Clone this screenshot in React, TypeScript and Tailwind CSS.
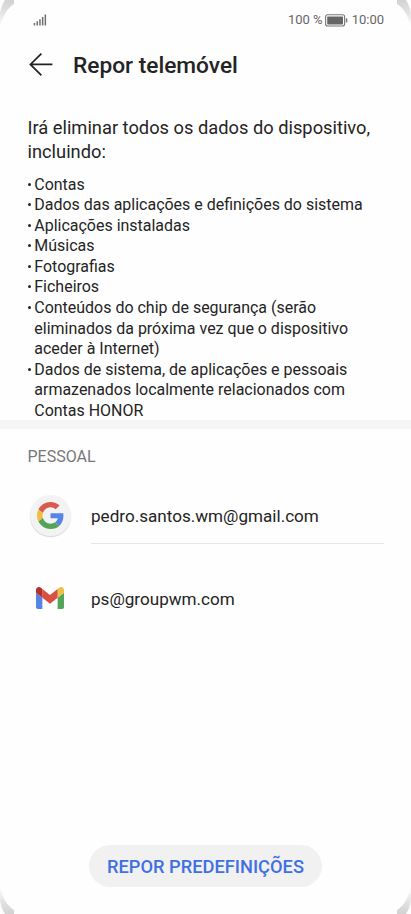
const FONT = "font-[Roboto,sans-serif]"

const items: string[][] = [
  ["Contas"],
  ["Dados das aplicações e definições do sistema"],
  ["Aplicações instaladas"],
  ["Músicas"],
  ["Fotografias"],
  ["Ficheiros"],
  ["Conteúdos do chip de segurança (serão", "eliminados da próxima vez que o dispositivo", "aceder à Internet)"],
  ["Dados de sistema, de aplicações e pessoais", "armazenados localmente relacionados com", "Contas HONOR"],
]

function Corner({ id, className }: { id: string; className: string }) {
  return (
    <svg className={`pointer-events-none absolute ${className}`} width="14" height="27" viewBox="0 0 14 27" aria-hidden="true">
      <defs>
        <linearGradient id={id} x1="10" y1="0" x2="2" y2="26" gradientUnits="userSpaceOnUse">
          <stop offset="0" stopColor="#d2d2d2" />
          <stop offset="0.5" stopColor="#e2e2e2" />
          <stop offset="1" stopColor="#fcfcfc" />
        </linearGradient>
      </defs>
      <path d="M5 0H14V4C7 8.5 2.5 16 0.7 27H0V13C1 8 2.5 4 5 0Z" fill={`url(#${id})`} />
    </svg>
  )
}

function SignalIcon() {
  return (
    <svg className="ml-[33px] block" width="14" height="12" viewBox="0 0 14 12" fill="#707070" aria-hidden="true">
      <rect x="0.7" y="9" width="1.5" height="2.5" />
      <rect x="3.5" y="7.3" width="1.5" height="4.2" />
      <rect x="6.2" y="5.2" width="1.5" height="6.3" />
      <rect x="8.9" y="3" width="1.5" height="8.5" />
      <rect x="11.6" y="0.5" width="1.5" height="11" />
    </svg>
  )
}

function BatteryIcon() {
  return (
    <svg className="ml-[2px] mr-[4px] block" width="23" height="13" viewBox="0 0 23 13" aria-hidden="true">
      <rect x="0.6" y="0.8" width="19" height="11.2" rx="2" fill="none" stroke="#777" strokeWidth="1.1" />
      <rect x="2.2" y="2.4" width="15.8" height="8" rx="0.6" fill="#666" />
      <path d="M20.8 4.2h.7c.5 0 .8.4.8.9v2.6c0 .5-.3.9-.8.9h-.7z" fill="#777" />
    </svg>
  )
}

function BackIcon() {
  return (
    <svg width="24" height="24" viewBox="0 0 24 24" fill="none" stroke="#222" strokeWidth="1.7" aria-hidden="true">
      <path d="M12.4 .6 1.4 11.4l11 10.9M1.4 11.4h22" />
    </svg>
  )
}

function GoogleIcon() {
  return (
    <div className="flex size-[41px] items-center justify-center rounded-full bg-[#f3f3f3] shadow-[0_1px_1px_rgba(0,0,0,0.16)]">
      <svg width="27" height="27" viewBox="0 0 48 48" aria-hidden="true">
        <path fill="#d95b4c" d="M24 9.5c3.54 0 6.71 1.22 9.21 3.6l6.85-6.85C35.9 2.38 30.47 0 24 0 14.62 0 6.51 5.38 2.56 13.22l7.98 6.19C12.43 13.72 17.74 9.5 24 9.5z" />
        <path fill="#5685e6" d="M46.98 24.55c0-1.57-.15-3.09-.38-4.55H24v9.02h12.94c-.58 2.96-2.26 5.48-4.78 7.18l7.73 6c4.51-4.18 7.09-10.36 7.09-17.65z" />
        <path fill="#f2bd42" d="M10.53 28.59c-.48-1.45-.76-2.99-.76-4.59s.27-3.14.76-4.59l-7.98-6.19C.92 16.46 0 20.12 0 24c0 3.88.92 7.54 2.56 10.78l7.97-6.19z" />
        <path fill="#54a45b" d="M24 48c6.48 0 11.93-2.13 15.89-5.81l-7.73-6c-2.15 1.45-4.92 2.3-8.16 2.3-6.26 0-11.57-4.22-13.47-9.91l-7.98 6.19C6.51 42.62 14.62 48 24 48z" />
      </svg>
    </div>
  )
}

function GmailIcon() {
  return (
    <svg width="28" height="22" viewBox="52 42 88 66" preserveAspectRatio="none" aria-hidden="true">
      <path fill="#5685e6" d="M58 108h14V74L52 59v43c0 3.32 2.69 6 6 6" />
      <path fill="#54a45b" d="M120 108h14c3.32 0 6-2.69 6-6V59l-20 15" />
      <path fill="#efbf46" d="M120 48v26l20-15v-8c0-7.42-8.47-11.65-14.4-7.2" />
      <path fill="#d95040" d="M72 74V48l24 18 24-18v26L96 92" />
      <path fill="#b53028" d="M52 51v8l20 15V48l-5.6-4.2c-5.94-4.45-14.4-.22-14.4 7.2" />
    </svg>
  )
}

export default function App() {
  return (
    <div className={`relative flex h-[914px] w-[411px] flex-col overflow-hidden bg-[#fefefe] text-[#242424] ${FONT}`}>
      <Corner id="tl" className="left-0 top-0" />
      <Corner id="tr" className="right-0 top-0 -scale-x-100" />
      <Corner id="bl" className="bottom-0 left-0 -scale-y-100" />
      <Corner id="br" className="bottom-0 right-0 -scale-100" />

      <div className="flex h-10 items-center justify-between pr-[27px] text-[13px] text-[#666]">
        <SignalIcon />
        <div className="flex items-center">
          <span>100 %</span>
          <BatteryIcon />
          <span>10:00</span>
        </div>
      </div>

      <header className="flex h-[50px] items-center gap-5 pl-[29px]">
        <BackIcon />
        <h1 className="pt-[2px] text-[22.7px] font-medium leading-none">Repor telemóvel</h1>
      </header>

      <section className="h-[330px] pl-[27.5px] pt-[26px]">
        <p className="whitespace-nowrap text-[18.3px] leading-6">
          Irá eliminar todos os dados do dispositivo,
          <br />
          incluindo:
        </p>
        <ul className="mt-[10.5px] text-[15.97px] leading-[20.6px]">
          {items.map((lines) => (
            <li key={lines[0]} className="flex">
              <span className="w-[6.8px] shrink-0">
                <span className="mt-[8px] block size-[3px] rounded-full bg-[#242424]" />
              </span>
              <div className="whitespace-nowrap">
                {lines.map((line) => (
                  <div key={line}>{line}</div>
                ))}
              </div>
            </li>
          ))}
        </ul>
      </section>

      <div className="h-[9px] bg-[#f6f6f6]" />

      <section>
        <h2 className="pl-[27.5px] pt-[16px] text-[16px] leading-6 text-[#777]">PESSOAL</h2>
        <div className="flex h-[75px] pl-[29.5px] pr-[27px]">
          <div className="w-[61.5px] pt-[26px]">
            <GoogleIcon />
          </div>
          <div className="flex flex-1 items-center border-b border-[#e6e6e6] pt-[22px] text-[17.1px]">pedro.santos.wm@gmail.com</div>
        </div>
        <div className="mt-[33px] flex h-[42px] items-center pl-[36px]">
          <div className="w-[55px]">
            <GmailIcon />
          </div>
          <span className="pt-[3px] text-[17.1px]">ps@groupwm.com</span>
        </div>
      </section>

      <div className="mb-[27px] mt-auto flex justify-center">
        <button className="h-[42px] w-[233px] rounded-full bg-[#f1f1f1] pt-[2px] text-[18.25px] font-medium text-[#3f70e4]">REPOR PREDEFINIÇÕES</button>
      </div>
    </div>
  )
}
